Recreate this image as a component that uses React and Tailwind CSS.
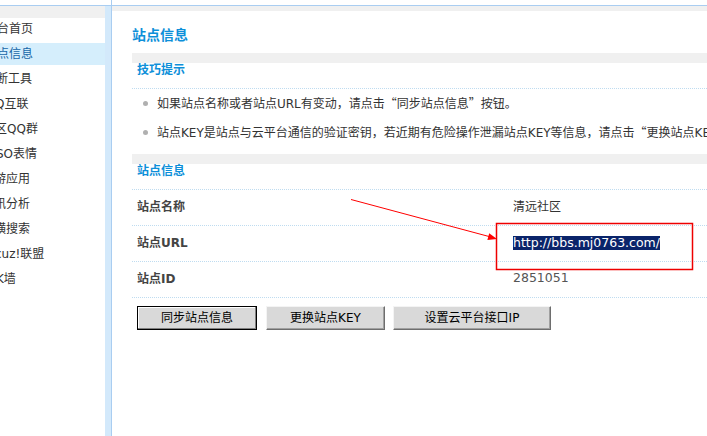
import React from 'react';

const MENU = [
  { text: '台首页', cls: '-ml-[3px]' },
  { text: '点信息', cls: '-ml-[3px]', on: true },
  { text: '断工具', cls: '-ml-[4px]' },
  { text: 'Q互联', cls: '-ml-[5px]' },
  { text: '区QQ群', cls: '-ml-[5px]' },
  { text: 'SO表情', cls: '-ml-[4px]' },
  { text: '游应用', cls: '-ml-[6px]' },
  { text: '讯分析', cls: '-ml-[6px]' },
  { text: '横搜索', cls: '-ml-[6px]' },
  { text: 'cuz!联盟', cls: '-ml-[5px]' },
  { text: 'K墙', cls: '-ml-[4px]' },
];

const Q = ({ children }) => <span className="font-['Noto_Sans_CJK_SC',sans-serif]">{children}</span>;

function SectionHead({ children }) {
  return (
    <>
      <div className="h-[10px] bg-[#f0f0f0]" />
      <div className="h-[26px] border-b border-dotted border-[#bfdcf0] pl-[5px] text-[12px] font-bold leading-[14px] text-[#0d8fd9]">
        {children}
      </div>
    </>
  );
}

function Row({ label, children }) {
  return (
    <div className="flex h-[36px] items-center border-b border-dotted border-[#bfdcf0] pb-[2px]">
      <div className="w-[376px] shrink-0 pl-[5px] font-bold text-[#444]">{label}</div>
      <div className="pl-[5px]">{children}</div>
    </div>
  );
}

export default function App() {
  return (
    <div className="relative flex h-[436px] w-[707px] overflow-hidden bg-white text-[12px] text-[#333] font-['DejaVu_Sans','Noto_Sans_CJK_SC',sans-serif]">
      {/* 左侧菜单 */}
      <aside className="flex w-[111px] shrink-0 flex-col">
        <div className="h-[5px]" />
        <div className="h-px bg-[#a9cdf1]" />
        <div className="flex flex-1">
          <div className="flex w-[105px] flex-col overflow-hidden">
            <div className="h-[12px] bg-[#f0f0f0]" />
            <ul className="flex flex-col gap-[3px]">
              {MENU.map((m) => (
                <li
                  key={m.text}
                  className={`flex h-[22px] items-center whitespace-nowrap ${m.on ? 'bg-[#d5eefc] text-[#1566a8]' : ''}`}
                >
                  <span className={m.cls}>{m.text}</span>
                </li>
              ))}
            </ul>
          </div>
          <div className="w-[6px] bg-[#d3e9fb]" />
        </div>
      </aside>
      <div className="w-px shrink-0 bg-[#a9cdf1]" />

      {/* 主内容 */}
      <main className="flex min-w-0 flex-1 flex-col overflow-hidden">
        <div className="h-[5px]" />
        <div className="h-px bg-[#a9cdf1]" />
        <div className="h-[5px] bg-[#f0f0f0]" />
        <div className="pl-[20px]">
          <h2 className="h-[42px] pt-[14px] text-[14px] font-bold leading-[20px] text-[#0d8fd9]">站点信息</h2>

          <SectionHead>技巧提示</SectionHead>
          <ul className="pb-[7px] whitespace-nowrap">
            <li className="flex h-[29px] items-center pl-[11px]">
              <span className="mr-[9px] inline-block h-[5px] w-[5px] shrink-0 rounded-full bg-[#b0b0b0]" />
              <span>
                如果站点名称或者站点URL有变动，请点击<Q>“</Q>同步站点信息<Q>”</Q>按钮。
              </span>
            </li>
            <li className="flex h-[29px] items-center pl-[11px]">
              <span className="mr-[9px] inline-block h-[5px] w-[5px] shrink-0 rounded-full bg-[#b0b0b0]" />
              <span>
                站点KEY是站点与云平台通信的验证密钥，若近期有危险操作泄漏站点KEY等信息，请点击<Q>“</Q>更换站点KEY<Q>”</Q>按钮。
              </span>
            </li>
          </ul>

          <SectionHead>站点信息</SectionHead>
          <Row label="站点名称">清远社区</Row>
          <Row label="站点URL">
            <span className="inline-block bg-[#0a246a] text-[12.5px] leading-[14px] text-white">http://bbs.mj0763.com/</span>
          </Row>
          <Row label="站点ID">
            <span className="text-[12.5px] text-[#555]">2851051</span>
          </Row>

          <div className="mt-[8px] flex pl-[5px] text-black">
            <button className="h-[24px] w-[120px] border border-black bg-[#d9d9d9] shadow-[inset_-1px_-1px_0_#808080,inset_1px_1px_0_#ffffff]">
              同步站点信息
            </button>
            <button className="ml-[9px] h-[24px] w-[119px] border border-t-[#f4f4f4] border-l-[#f4f4f4] border-r-[#6e6e6e] border-b-[#6e6e6e] bg-[#d9d9d9] shadow-[inset_-1px_-1px_0_#a0a0a0]">
              更换站点KEY
            </button>
            <button className="ml-[8px] h-[24px] w-[158px] border border-t-[#f4f4f4] border-l-[#f4f4f4] border-r-[#6e6e6e] border-b-[#6e6e6e] bg-[#d9d9d9] shadow-[inset_-1px_-1px_0_#a0a0a0]">
              设置云平台接口IP
            </button>
          </div>
        </div>
      </main>

      {/* 截图标注 */}
      <svg className="pointer-events-none absolute inset-0" width="707" height="436">
        <line x1="351" y1="199.5" x2="489" y2="236.5" stroke="#ff0000" strokeWidth="1" />
        <polygon points="497,239 487.4,240 489.2,233.2" fill="#ff0000" />
        <rect x="496.5" y="223.5" width="196" height="46" fill="none" stroke="#ee0000" strokeWidth="1.5" />
      </svg>
    </div>
  );
}
